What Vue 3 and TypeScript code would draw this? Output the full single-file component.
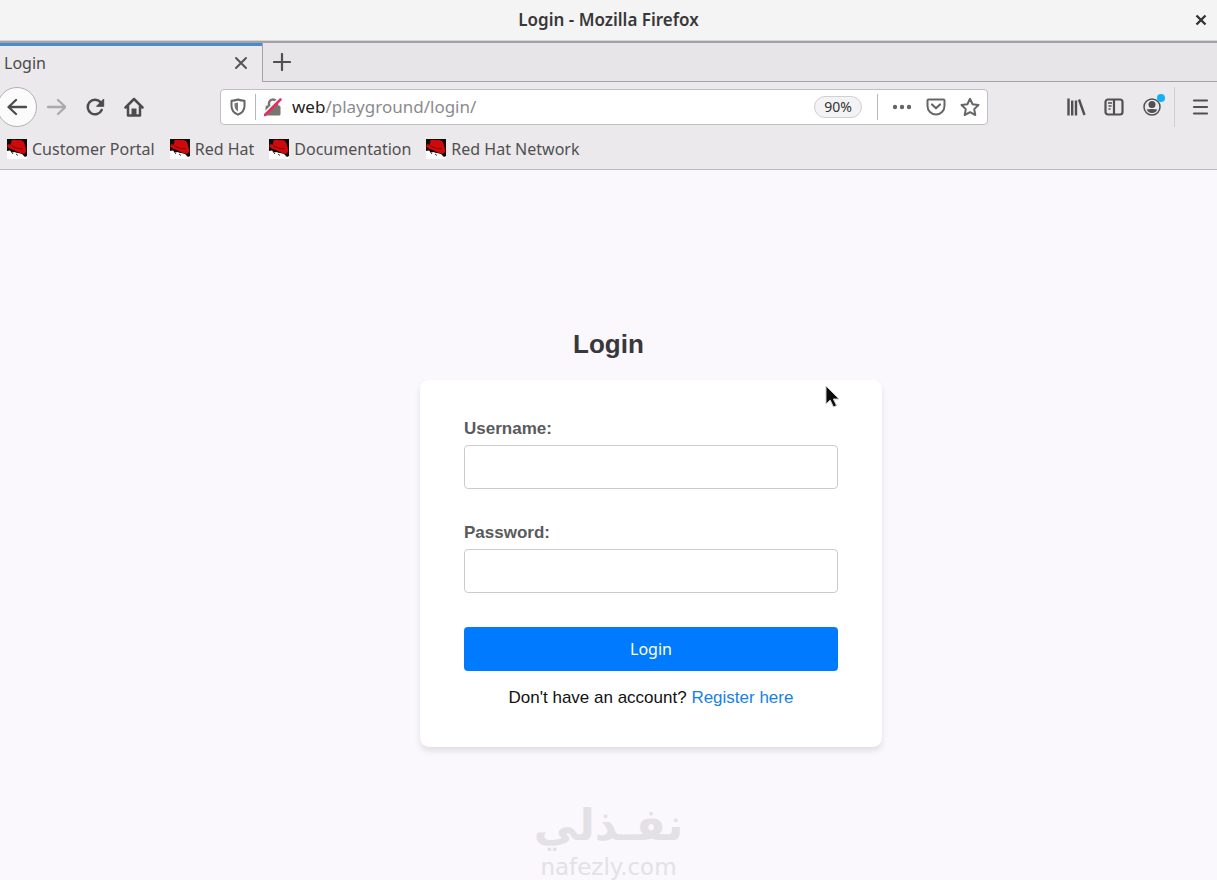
<script setup lang="ts">
import { ref } from 'vue'

const bookmarks = ['Customer Portal', 'Red Hat', 'Documentation', 'Red Hat Network']
const username = ref('')
const password = ref('')
</script>

<template>
  <div class="window">
    <header class="titlebar">
      <span class="title">Login - Mozilla Firefox</span>
      <button class="icon-btn window-close" type="button" aria-label="Close window">
        <svg width="12" height="12" viewBox="0 0 12 12"><path d="M1.500 1.500l9 9M10.500 1.500l-9 9" stroke="#333" stroke-width="2.400" /></svg>
      </button>
    </header>

    <div class="tabs">
      <div class="tab">
        <span>Login</span>
        <button class="icon-btn" type="button" aria-label="Close tab">
          <svg width="14" height="14" viewBox="0 0 14 14"><path d="M2 2l10 10M12 2L2 12" stroke="#555" stroke-width="2" stroke-linecap="round" /></svg>
        </button>
      </div>
      <div class="strip">
        <button class="icon-btn" type="button" aria-label="New tab">
          <svg width="18" height="18" viewBox="0 0 18 18"><path d="M9 1v16M1 9h16" stroke="#505050" stroke-width="2.200" stroke-linecap="round" /></svg>
        </button>
      </div>
    </div>

    <nav class="toolbar" aria-label="Navigation">
      <div class="nav-group">
        <button class="icon-btn back" type="button" aria-label="Back">
          <svg width="20" height="20" viewBox="0 0 20 20"><path d="M9 3L1.500 10 9 17M2 10h17" class="line" /></svg>
        </button>
        <button class="icon-btn" type="button" aria-label="Forward" disabled>
          <svg width="20" height="20" viewBox="0 0 20 20"><path d="M12 3l7.500 7L12 17M19 10H2" class="line faded" /></svg>
        </button>
        <button class="icon-btn" type="button" aria-label="Reload">
          <svg width="20" height="20" viewBox="0 0 20 20">
            <path d="M15.500 5.200A7.300 7.300 0 1 0 16.700 13" class="line heavy" />
            <path d="M18.700 2v7.300H11.500z" fill="#4c4c4f" stroke="#4c4c4f" stroke-linejoin="round" />
          </svg>
        </button>
        <button class="icon-btn" type="button" aria-label="Home">
          <svg width="20" height="20" viewBox="0 0 20 20">
            <path d="M1.500 10.500L10 2l8.500 8.500M4 9.500v9h12v-9" class="line heavy" />
            <path d="M7.500 18v-6.500h5V18z" fill="#4c4c4f" />
          </svg>
        </button>
      </div>

      <div class="address">
        <button class="icon-btn" type="button" aria-label="Tracking protection">
          <svg width="18" height="18" viewBox="0 0 18 18">
            <path d="M9 1.500c2 .8 4 1.200 6.500 1.300V8c0 4-2.500 7-6.500 8.700C5 15 2.500 12 2.500 8V2.800C5 2.700 7 2.300 9 1.500z" fill="none" stroke="#666" stroke-width="2" stroke-linejoin="round" />
            <path d="M9 4.500v9C6.700 12 5.500 10 5.500 7.500v-2.300z" fill="#777" />
          </svg>
        </button>
        <span class="rule"></span>
        <button class="icon-btn lock" type="button" aria-label="Connection not secure">
          <svg width="18" height="20" viewBox="0 0 18 20">
            <path d="M5 9V6.500a4 4 0 0 1 8 0V9" fill="none" stroke="#77776f" stroke-width="2.500" />
            <rect x="1.500" y="8.500" width="15" height="10" rx="1.500" fill="#77776f" />
            <path d="M0 16.500L15 1.500" stroke="#fff" stroke-width="2" />
            <path d="M1 18L16.500 2.500" stroke="#ee2860" stroke-width="2.500" stroke-linecap="round" />
          </svg>
        </button>
        <a class="url" href="#"><strong>web</strong>/playground/login/</a>
        <button class="zoom" type="button">90%</button>
        <span class="rule"></span>
        <div class="actions">
          <button class="icon-btn" type="button" aria-label="Page actions">
            <svg width="20" height="20" viewBox="0 0 20 20" fill="#666"><circle cx="3" cy="10" r="2.200" /><circle cx="10" cy="10" r="2.200" /><circle cx="17" cy="10" r="2.200" /></svg>
          </button>
          <button class="icon-btn" type="button" aria-label="Save to Pocket">
            <svg width="20" height="20" viewBox="0 0 20 20" fill="none" stroke="#666" stroke-width="2" stroke-linecap="round" stroke-linejoin="round">
              <path d="M2.500 2.500h15a1 1 0 0 1 1 1V9a8.500 8.500 0 0 1-17 0V3.500a1 1 0 0 1 1-1z" /><path d="M6 7.500l4 3.800 4-3.800" stroke-width="2.200" />
            </svg>
          </button>
          <button class="icon-btn" type="button" aria-label="Bookmark this page">
            <svg width="20" height="20" viewBox="0 0 20 20" fill="none" stroke="#666" stroke-width="2" stroke-linejoin="round">
              <path d="M10 1.800l2.600 5.400 5.900.8-4.300 4.100 1.100 5.900L10 15.200 4.700 18l1.100-5.900L1.500 8l5.900-.8z" />
            </svg>
          </button>
        </div>
      </div>

      <div class="tools">
        <button class="icon-btn" type="button" aria-label="Library">
          <svg width="20" height="20" viewBox="0 0 20 20" stroke="#505053" stroke-width="2.400"><path d="M2.500 1.500v17M6.200 3.500v15M10 3.500v15M13 2.500l5.500 15.500" /></svg>
        </button>
        <button class="icon-btn" type="button" aria-label="Sidebars">
          <svg width="20" height="20" viewBox="0 0 20 20" fill="none" stroke="#505053" stroke-width="2.200">
            <rect x="1.500" y="2.500" width="17" height="15" rx="2.500" /><path d="M10 2.500v15" /><path d="M4 6h4M4.500 9h3M4.500 12h2" stroke-width="1.300" />
          </svg>
        </button>
        <button class="icon-btn account" type="button" aria-label="Account">
          <svg width="20" height="20" viewBox="0 0 20 20" fill="#505053">
            <circle cx="10" cy="10" r="8" fill="none" stroke="#505053" stroke-width="1.500" />
            <circle cx="10" cy="7.500" r="3.500" /><path d="M4.500 12.500c3-.8 8-.8 11 0-1.300 2.500-3 3.500-5.500 3.500s-4.200-1-5.500-3.500z" />
          </svg>
          <i class="dot"></i>
        </button>
        <span class="rule tall"></span>
        <button class="icon-btn" type="button" aria-label="Menu">
          <svg width="18" height="18" viewBox="0 0 18 18" stroke="#505053" stroke-width="2.200" stroke-linecap="round"><path d="M3 2.500h13M3 9h13M3 15.500h13" /></svg>
        </button>
      </div>
    </nav>

    <nav class="bookmarks" aria-label="Bookmarks">
      <a v-for="name in bookmarks" :key="name" href="#">
        <svg width="20" height="20" viewBox="0 0 20 20">
          <path d="M0 0h20v20H0z" fill="#fff" />
          <path d="M0 0h20v17l-2 1-3-3-4-1-8-1-3-1z" fill="#100c0c" />
          <path d="M4.500 1.500c2.500-1.500 4.500 0 6.500-.3C14 .5 17 2 17.500 5l1.500 5c.7 4-1.500 5.500-4 4.500-3.500-1-6.500-2.500-9.500-4C2 9.500 0 8 .5 6c.5-1.500 2.500-.5 3.500-.5z" fill="#d00a0c" />
          <path d="M4.500 6.500c3 2.500 7 3.500 11 3" fill="none" stroke="#7c0808" />
          <path d="M0 12l3-.5 2 2.500 3-1 2 2.500 3-.5 2 3V20H0z" fill="#fff" />
          <path d="M4.500 13l1.500 2M9 15l2 1.500" fill="none" stroke="#333" />
        </svg>
        <span>{{ name }}</span>
      </a>
    </nav>

    <main class="page">
      <h1>Login</h1>
      <form class="card" @submit.prevent>
        <label for="username">Username:</label>
        <input id="username" v-model="username" type="text" />
        <label for="password">Password:</label>
        <input id="password" v-model="password" type="password" />
        <button class="submit" type="submit">Login</button>
        <p>Don't have an account? <a href="#">Register here</a></p>
        <svg class="pointer" width="16" height="24" viewBox="0 0 16 24">
          <path d="M1 1v18l4.200-4 3.300 7 3-1.500-3.200-6.500H14z" fill="#0b0b0b" stroke="#c9c9cb" stroke-linejoin="round" />
        </svg>
      </form>
      <div class="watermark">
        <span class="arabic" lang="ar" dir="rtl">نفـذلي</span>
        <span class="latin">nafezly.com</span>
      </div>
    </main>
  </div>
</template>

<style>
body {
  margin: 0;
}
</style>

<style scoped>
.window {
  display: flex;
  flex-direction: column;
  height: 100vh;
  overflow: hidden;
  background: #faf8fc;
  color: #4a4a4a;
  font: 16px/24px "Noto Sans", "Open Sans", sans-serif;
}
.icon-btn {
  display: flex;
  align-items: center;
  justify-content: center;
  flex: none;
  padding: 0;
  border: 0;
  background: none;
}
svg {
  display: block;
}
.line {
  fill: none;
  stroke: #4c4c4f;
  stroke-width: 2.3;
  stroke-linecap: round;
  stroke-linejoin: round;
}
.heavy {
  stroke-width: 2.5;
}
.faded {
  stroke: #aaa9ab;
}
.titlebar {
  display: flex;
  position: relative;
  align-items: center;
  justify-content: center;
  flex: none;
  height: 40px;
  background: #f5f4f5;
  border-bottom: 1px solid #d5d5d5;
}
.title {
  color: #383838;
  font-size: 17px;
  font-weight: 600;
}
.window-close {
  position: absolute;
  right: 10px;
}
.tabs {
  display: flex;
  flex: none;
  height: 41px;
  box-sizing: border-box;
  border-top: 2px solid #a3a2a4;
  background: #ebe9ec;
}
.tab {
  display: flex;
  align-items: center;
  justify-content: space-between;
  box-sizing: border-box;
  width: 262px;
  padding: 0 14px 2px 4px;
  border-top: 3px solid #4c8bcb;
}
.strip {
  display: flex;
  align-items: center;
  flex: 1;
  padding-left: 10px;
  border-left: 1px solid #a3a2a4;
  border-bottom: 1px solid #a3a2a4;
  background: #e7e5e8;
}
.toolbar {
  display: flex;
  align-items: center;
  flex: none;
  height: 49px;
  background: #ebe9ec;
}
.nav-group {
  display: flex;
  align-items: center;
  gap: 19px;
  width: 220px;
}
.back {
  width: 40px;
  height: 40px;
  margin: 0 -10px 0 -3px;
  box-sizing: border-box;
  border: 1px solid #b1b0b2;
  border-radius: 50%;
  background: #fbfbfc;
}
.address {
  display: flex;
  align-items: center;
  flex: 1;
  box-sizing: border-box;
  height: 36px;
  padding: 0 7px 0 8px;
  border: 1px solid #bfbec1;
  border-radius: 4px;
  background: #fff;
}
.rule {
  width: 1px;
  height: 26px;
  margin-left: 8px;
  background: #b8b7ba;
}
.lock {
  margin: 0 10px 0 8px;
}
.url {
  flex: 1;
  color: #8b8b8d;
  font-size: 17px;
  text-decoration: none;
}
.url strong {
  color: #222;
  font-weight: 400;
}
.zoom {
  height: 22px;
  margin-right: 7px;
  padding: 0 9px;
  border: 1px solid #d0cfd2;
  border-radius: 11px;
  background: #f3f2f4;
  color: #333;
  font: 14px/20px "Noto Sans", sans-serif;
}
.actions {
  display: flex;
  gap: 14px;
  margin-left: 14px;
}
.tools {
  display: flex;
  align-items: center;
  justify-content: flex-end;
  gap: 18px;
  width: 229px;
}
.tools .icon-btn:last-child {
  margin-right: 8px;
}
.account {
  position: relative;
}
.dot {
  position: absolute;
  top: -3px;
  right: -3px;
  width: 8px;
  height: 8px;
  border-radius: 50%;
  background: #12b0f5;
}
.tall {
  height: 40px;
  margin-left: -6px;
  margin-right: -2px;
  background: #cfced1;
}
.bookmarks {
  display: flex;
  align-items: center;
  flex: none;
  box-sizing: border-box;
  gap: 15px;
  height: 39px;
  padding: 0 0 2px 7px;
  border-bottom: 1px solid #bbbabd;
  background: #ebe9ec;
}
.bookmarks a {
  display: flex;
  align-items: center;
  gap: 5px;
  color: #505050;
  text-decoration: none;
}
.page {
  display: flex;
  flex-direction: column;
  align-items: center;
  flex: 1;
  padding-top: 159px;
  font-family: "Liberation Sans", Arial, sans-serif;
}
h1 {
  margin: 0 0 21px;
  color: #38373a;
  font-size: 26px;
  line-height: 30px;
}
.card {
  position: relative;
  display: flex;
  flex-direction: column;
  box-sizing: border-box;
  width: 462px;
  margin-left: 85px;
  padding: 39px 44px;
  border-radius: 9px;
  background: #fff;
  box-shadow: 0 4px 6px rgba(0, 0, 0, 0.1);
}
label {
  margin-bottom: 6px;
  color: #5a5a5c;
  font-size: 17px;
  font-weight: 700;
  line-height: 20px;
}
input {
  box-sizing: border-box;
  height: 44px;
  margin: 0 0 34px;
  padding: 0 12px;
  border: 1px solid #cccace;
  border-radius: 4px;
  background: #fff;
  font: inherit;
}
.submit {
  height: 44px;
  padding: 0;
  border: 0;
  border-radius: 4px;
  background: #007bff;
  color: #fff;
  font: 16px/24px "Noto Sans", sans-serif;
}
p {
  margin: 17px 0 0;
  color: #111;
  font-size: 17px;
  line-height: 20px;
  text-align: center;
}
p a {
  color: #1681e8;
  text-decoration: none;
}
.pointer {
  position: absolute;
  top: 5px;
  right: 41px;
}
.watermark {
  display: flex;
  flex-direction: column;
  align-items: center;
  margin-top: 48px;
  color: #e3e1e5;
  font-family: "DejaVu Sans", sans-serif;
}
.arabic {
  font-size: 44px;
  font-weight: 700;
  line-height: 60px;
}
.latin {
  font-size: 23px;
  line-height: 24px;
}
</style>
